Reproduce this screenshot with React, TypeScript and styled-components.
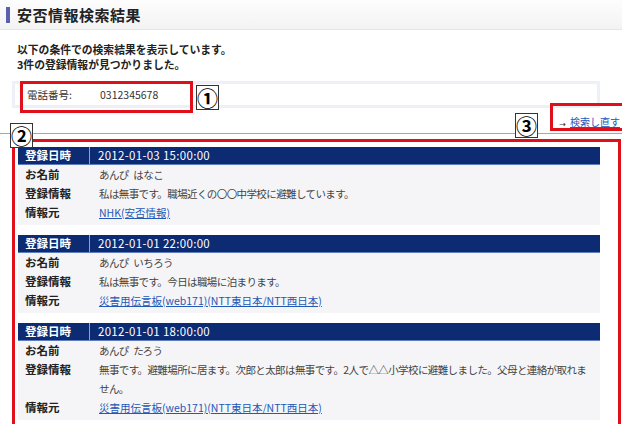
import React from "react";
import styled, { createGlobalStyle } from "styled-components";

const GlobalStyle = createGlobalStyle`
    body {
        margin: 0;
        background: #fff;
        font-family: "Noto Sans CJK JP", "Noto Sans", sans-serif;
        font-size: 11px;
        color: #333;
    }
`

type Row = { label: string, value: string, link?: boolean }
type Record = { date: string, rows: Row[] }

const records: Record[] = [
    {
        date: '2012-01-03 15:00:00',
        rows: [
            { label: 'お名前', value: 'あんぴ\u2002はなこ' },
            { label: '登録情報', value: '私は無事です。職場近くの〇〇中学校に避難しています。' },
            { label: '情報元', value: 'NHK(安否情報)', link: true },
        ],
    },
    {
        date: '2012-01-01 22:00:00',
        rows: [
            { label: 'お名前', value: 'あんぴ\u2002いちろう' },
            { label: '登録情報', value: '私は無事です。今日は職場に泊まります。' },
            { label: '情報元', value: '災害用伝言板(web171)(NTT東日本/NTT西日本)', link: true },
        ],
    },
    {
        date: '2012-01-01 18:00:00',
        rows: [
            { label: 'お名前', value: 'あんぴ\u2002たろう' },
            { label: '登録情報', value: '無事です。避難場所に居ます。次郎と太郎は無事です。2人で△△小学校に避難しました。父母と連絡が取れません。' },
            { label: '情報元', value: '災害用伝言板(web171)(NTT東日本/NTT西日本)', link: true },
        ],
    },
]

const Page = styled.div`
    position: relative;
    width: 622px;
    height: 424px;
    overflow: hidden;
`
const Header = styled.div`
    display: flex;
    align-items: center;
    height: 30px;
    padding-left: 6px;
    background: linear-gradient(#fdfdfd, #f3f3f3);
    border-bottom: 1px solid #e6e6e6;
    box-sizing: border-box;
`
const TitleBar = styled.div`
    width: 4px;
    height: 16px;
    background: #5b5fae;
`
const Title = styled.h1`
    margin: 0 0 0 7px;
    font-size: 15px;
    font-weight: bold;
    color: #222;
    letter-spacing: 0.5px;
`
const Intro = styled.div`
    padding: 12px 17px 0;
    font-size: 10.8px;
    font-weight: bold;
    line-height: 15px;
    color: #222;
`
const Condition = styled.div`
    display: flex;
    align-items: center;
    margin: 9px 22px 0 12px;
    height: 21px;
    padding-left: 12px;
    border: 3px solid #eef0f7;
    font-size: 10.5px;
    color: #333;
`
const CondLabel = styled.span`
    width: 73px;
`
const LinkRow = styled.div`
    display: flex;
    justify-content: flex-end;
    align-items: flex-end;
    height: 26px;
    padding: 0 2px 4px 0;
    box-sizing: border-box;
    border-bottom: 1px solid #a8a8a8;
    font-size: 10px;
    white-space: nowrap;
`
const Arrow = styled.span`
    font-family: "DejaVu Sans", sans-serif;
    font-size: 8px;
    margin-right: 4px;
    color: #333;
`
const Link = styled.a`
    color: #2458b8;
    text-decoration: underline;
    letter-spacing: 0;
`
const Results = styled.div`
    margin: 5px 0 0 12px;
    width: 609px;
    padding: 5px 18px 0 3px;
    border: 3px solid #e0101a;
    box-sizing: border-box;
    height: 300px;
`
const Card = styled.div`
    background: #f5f5f7;
    margin-bottom: 10px;
    padding-bottom: 3px;
`
const CardHead = styled.div`
    display: grid;
    grid-template-columns: 72px 1fr;
    height: 18px;
    box-sizing: border-box;
    background: #0d2b72;
    border-bottom: 1px solid #5f7cbd;
    color: #fff;
    line-height: 17px;
`
const HeadLabel = styled.div`
    padding-left: 7px;
    font-size: 11.5px;
    font-weight: bold;
    border-right: 1px solid #8ea2d0;
`
const HeadValue = styled.div`
    padding-left: 8px;
    font-size: 11.5px;
    letter-spacing: 0.3px;
`
const CardRow = styled.div`
    display: grid;
    grid-template-columns: 72px 1fr;
    line-height: 19px;
`
const RowLabel = styled.div`
    padding-left: 7px;
    font-size: 11.5px;
    font-weight: bold;
    color: #222;
`
const RowValue = styled.div<{ link?: boolean }>`
    padding: 0 6px 0 9px;
    color: #444;
    font-size: 10.5px;
    letter-spacing: ${p => p.link ? 0 : -0.6}px;
`
const RedBox = styled.div<{ left: number, top: number, w: number, h: number }>`
    position: absolute;
    left: ${p => p.left}px;
    top: ${p => p.top}px;
    width: ${p => p.w}px;
    height: ${p => p.h}px;
    border: 3px solid #e0101a;
    box-sizing: border-box;
`
const Badge = styled.div<{ left: number, top: number }>`
    position: absolute;
    left: ${p => p.left}px;
    top: ${p => p.top}px;
    width: 23px;
    height: 25px;
    display: flex;
    align-items: center;
    justify-content: center;
    background: #fff;
    border: 1px solid #333;
    box-sizing: border-box;
    font-size: 21px;
    font-weight: bold;
    color: #000;
    line-height: 1;
`

export default function App() {
    return (
        <Page>
            <GlobalStyle />
            <Header>
                <TitleBar />
                <Title>安否情報検索結果</Title>
            </Header>
            <Intro>
                <div>以下の条件での検索結果を表示しています。</div>
                <div>3件の登録情報が見つかりました。</div>
            </Intro>
            <Condition>
                <CondLabel>電話番号:</CondLabel>
                <span>0312345678</span>
            </Condition>
            <LinkRow>
                <Arrow>→</Arrow>
                <Link href="#">検索し直す</Link>
            </LinkRow>
            <Results>
                {records.map(r => (
                    <Card key={r.date}>
                        <CardHead>
                            <HeadLabel>登録日時</HeadLabel>
                            <HeadValue>{r.date}</HeadValue>
                        </CardHead>
                        {r.rows.map(row => (
                            <CardRow key={row.label}>
                                <RowLabel>{row.label}</RowLabel>
                                <RowValue link={row.link}>
                                    {row.link ? <Link href="#">{row.value}</Link> : row.value}
                                </RowValue>
                            </CardRow>
                        ))}
                    </Card>
                ))}
            </Results>

            <RedBox left={20} top={81} w={173} h={32} />
            <Badge left={196} top={85}>①</Badge>
            <Badge left={10} top={123}>②</Badge>
            <Badge left={515} top={113}>③</Badge>
            <RedBox left={550} top={103} w={76} h={28} />
        </Page>
    )
}
